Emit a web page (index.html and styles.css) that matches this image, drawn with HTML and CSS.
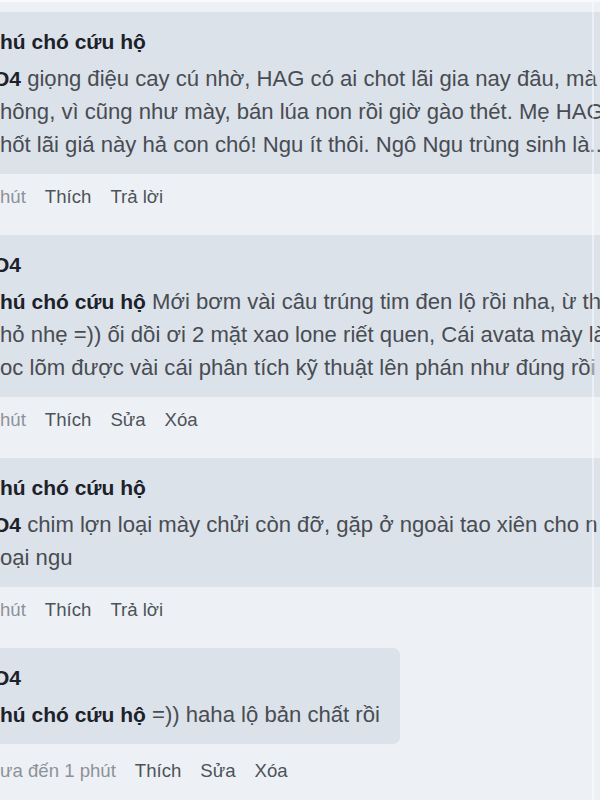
FILE: index.html
```html
<!DOCTYPE html>
<html lang="vi">
<head>
<meta charset="utf-8">
<title>Bình luận</title>
<link rel="stylesheet" href="styles.css">
</head>
<body>
<div class="page">
  <div class="thread">
    <div class="comment">
      <div class="bubble">
        <div class="name">hú chó cứu hộ</div>
        <div class="line"><b class="tag cut">O4</b> giọng điệu cay cú nhờ, HAG có ai chot lãi gia nay đâu, mà</div>
        <div class="line">hông, vì cũng như mày, bán lúa non rồi giờ gào thét. Mẹ HAG</div>
        <div class="line">hốt lãi giá này hả con chó! Ngu ít thôi. Ngô Ngu trùng sinh là...</div>
      </div>
      <div class="actions"><span class="time">hút</span><span class="act">Thích</span><span class="act">Trả lời</span></div>
    </div>

    <div class="comment">
      <div class="bubble">
        <div class="name"><span class="cut">O4</span></div>
        <div class="line"><b class="tag">hú chó cứu hộ</b> Mới bơm vài câu trúng tim đen lộ rồi nha, ừ th</div>
        <div class="line">hỏ nhẹ =)) ối dồi ơi 2 mặt xao lone riết quen, Cái avata mày là</div>
        <div class="line">oc lõm được vài cái phân tích kỹ thuật lên phán như đúng rồi</div>
      </div>
      <div class="actions"><span class="time">hút</span><span class="act">Thích</span><span class="act">Sửa</span><span class="act">Xóa</span></div>
    </div>

    <div class="comment">
      <div class="bubble">
        <div class="name">hú chó cứu hộ</div>
        <div class="line"><b class="tag cut">O4</b> chim lợn loại mày chửi còn đỡ, gặp ở ngoài tao xiên cho n</div>
        <div class="line">oại ngu</div>
      </div>
      <div class="actions"><span class="time">hút</span><span class="act">Thích</span><span class="act">Trả lời</span></div>
    </div>

    <div class="comment">
      <div class="bubble short">
        <div class="name"><span class="cut">O4</span></div>
        <div class="line"><b class="tag">hú chó cứu hộ</b> =)) haha lộ bản chất rồi</div>
      </div>
      <div class="actions"><span class="time">ưa đến 1 phút</span><span class="act">Thích</span><span class="act">Sửa</span><span class="act">Xóa</span></div>
    </div>
  </div>
  <div class="edge"></div>
</div>
</body>
</html>
```
FILE: styles.css
```css
html, body {
  margin: 0;
  padding: 0;
  background: #edf1f5;
}
body {
  width: 600px;
  height: 800px;
  overflow: hidden;
  font-family: "Liberation Sans", Arial, sans-serif;
}
.page {
  position: relative;
  width: 600px;
  height: 800px;
  overflow: hidden;
  border-top: 2px solid #f7f9fb;
  box-sizing: border-box;
}
.thread {
  padding-top: 10px;
  display: flex;
  flex-direction: column;
  align-items: flex-start;
}
.comment {
  width: 100%;
}
.bubble {
  background: #dce2e9;
  padding: 13px 0 13px 0;
  width: 620px;
  overflow: hidden;
}
.bubble.short {
  width: auto;
  display: inline-block;
  padding-right: 20px;
  border-radius: 0 7px 7px 0;
}
.name {
  font-size: 21px;
  font-weight: bold;
  line-height: 33px;
  color: #1d2129;
  margin-bottom: 4px;
  white-space: nowrap;
}
.line {
  font-size: 22.1px;
  line-height: 33px;
  color: #484c53;
  white-space: nowrap;
}
.tag {
  font-size: 21px;
  color: #1d2129;
}
.cut {
  display: inline-block;
  margin-left: -7px;
}
.actions {
  display: flex;
  gap: 19px;
  font-size: 18.6px;
  line-height: 26px;
  margin: 10px 0 25px 0;
  white-space: nowrap;
}
.time {
  color: #8d9299;
}
.act {
  color: #4e535a;
}
.edge {
  position: absolute;
  top: 0;
  bottom: 0;
  left: 592px;
  width: 2px;
  background: rgba(255, 255, 255, 0.45);
}
```
